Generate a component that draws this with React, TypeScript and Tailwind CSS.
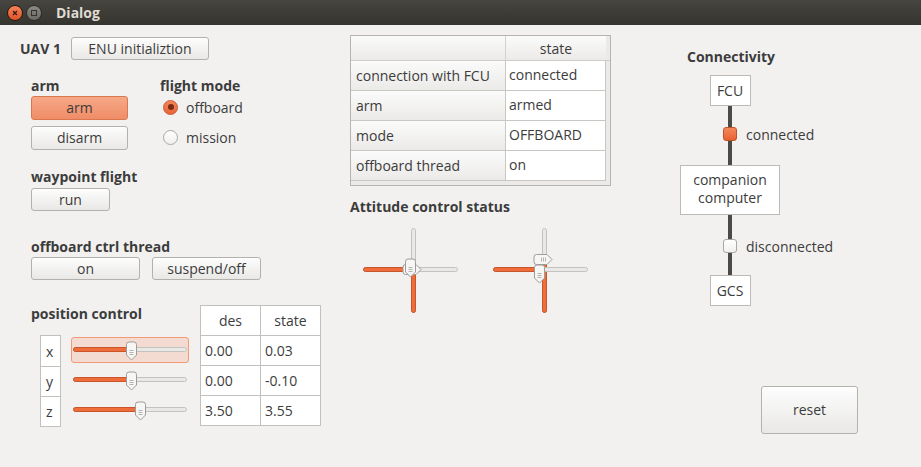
import React from 'react';

const btn =
    'h-[23px] rounded-[3px] border border-[#b3b1ae] bg-linear-to-b from-[#fdfdfd] to-[#e9e8e6] text-[14px] leading-none text-[#3c3c3c] shadow-[inset_0_1px_0_#ffffff]';

const HandleDown: React.FC = () => (
    <svg width="13" height="20" viewBox="0 0 13 20">
        <path d="M1.5 3.5 A2.5 2.5 0 0 1 4 1 H9 A2.5 2.5 0 0 1 11.5 3.5 V14 L6.5 19 L1.5 14 Z" fill="#f6f6f5" stroke="#9e9c99" />
        <path d="M4.5 9.5 H8.5 M4.5 11.5 H8.5 M4.5 13.5 H8.5" stroke="#b4b2af" strokeWidth="1" />
    </svg>
);

const HandleRight: React.FC = () => (
    <svg width="20" height="13" viewBox="0 0 20 13">
        <path d="M3.5 1.5 H14 L19 6.5 L14 11.5 H3.5 A2.5 2.5 0 0 1 1 9 V4 A2.5 2.5 0 0 1 3.5 1.5 Z" fill="#f6f6f5" stroke="#9e9c99" />
        <path d="M8.5 4.5 V8.5 M10.5 4.5 V8.5 M12.5 4.5 V8.5" stroke="#b4b2af" strokeWidth="1" />
    </svg>
);

const HSlider: React.FC<{ pos: number; focused?: boolean }> = ({ pos, focused }) => (
    <div
        className={
            'relative w-[118px] h-[26px] rounded-[3px] border ' +
            (focused ? 'bg-[#f3dbd1] border-[#f09a78]' : 'border-transparent')
        }
    >
        <div className="absolute left-[1px] right-[1px] top-[9px] h-[5px] rounded-full bg-[#e9e8e6] border border-[#c4c2bf]" />
        <div
            className="absolute left-[1px] top-[9px] h-[5px] rounded-full bg-[#ef6d3a] border border-[#c9552b]"
            style={{ width: pos }}
        />
        <div className="absolute top-[3px]" style={{ left: pos - 6 }}>
            <HandleDown />
        </div>
    </div>
);

const Crosshair: React.FC<{ vx: number; hx: number; vy: number; second?: boolean }> = ({ vx, hx, vy, second }) => (
    <div className="relative w-[100px] h-[90px]">
        {/* vertical slider groove */}
        <div className="absolute top-[3px] h-[85px] w-[5px] rounded-full bg-[#e9e8e6] border border-[#c4c2bf]" style={{ left: vx }} />
        <div
            className="absolute bottom-[2px] w-[5px] rounded-full bg-[#ef6d3a] border border-[#c9552b]"
            style={{ left: vx, top: vy }}
        />
        {/* horizontal slider groove */}
        <div className="absolute left-[3px] top-[42px] w-[95px] h-[5px] rounded-full bg-[#e9e8e6] border border-[#c4c2bf]" />
        <div
            className="absolute left-[3px] top-[42px] h-[5px] rounded-full bg-[#ef6d3a] border border-[#c9552b]"
            style={{ width: hx - 3 }}
        />
        {second ? (
            <>
                <div className="absolute" style={{ left: hx - 7, top: 39 }}>
                    <HandleDown />
                </div>
                <div className="absolute" style={{ left: vx - 9, top: vy - 7 }}>
                    <HandleRight />
                </div>
            </>
        ) : (
            <>
                <div className="absolute" style={{ left: vx - 9, top: vy - 3 }}>
                    <HandleRight />
                </div>
                <div className="absolute" style={{ left: hx - 6, top: 33 }}>
                    <HandleDown />
                </div>
            </>
        )}
    </div>
);

const Radio: React.FC<{ checked?: boolean; label: string }> = ({ checked, label }) => (
    <div className="flex items-center h-[30px]">
        {checked ? (
            <div className="w-[15px] h-[15px] ml-[3px] rounded-full border border-[#c9572d] bg-linear-to-b from-[#f4875a] to-[#e8643a] flex items-center justify-center">
                <div className="w-[6px] h-[6px] rounded-full bg-[#7a2c12]" />
            </div>
        ) : (
            <div className="w-[15px] h-[15px] ml-[3px] rounded-full border border-[#a9a7a4] bg-linear-to-b from-[#ffffff] to-[#f1f0ef]" />
        )}
        <span className="ml-[8px]">{label}</span>
    </div>
);

const Link: React.FC<{ on?: boolean; label: string; top: number; bottom: number }> = ({ on, label, top, bottom }) => (
    <div className="relative flex flex-col items-center">
        <div className="w-[4px] bg-[#4b4a47]" style={{ height: top }} />
        {on ? (
            <div className="w-[14px] h-[14px] rounded-[3px] border border-[#b9532b] bg-linear-to-b from-[#f5875a] to-[#e8612f]" />
        ) : (
            <div className="w-[14px] h-[14px] rounded-[3px] border border-[#a9a7a4] bg-linear-to-b from-[#ffffff] to-[#f1f0ef]" />
        )}
        <div className="w-[4px] bg-[#4b4a47]" style={{ height: bottom }} />
        <span className="absolute left-[23px] whitespace-nowrap leading-[14px]" style={{ top: top + 1 }}>
            {label}
        </span>
    </div>
);

const statusRows = [
    ['connection with FCU', 'connected'],
    ['arm', 'armed'],
    ['mode', 'OFFBOARD'],
    ['offboard thread', 'on'],
];

const posRows = [
    ['x', 59, '0.00', '0.03'],
    ['y', 59, '0.00', '-0.10'],
    ['z', 68, '3.50', '3.55'],
] as const;

export default function App() {
    return (
        <div className="w-[921px] h-[467px] bg-[#f2f1f0] flex flex-col overflow-hidden font-['Open_Sans',sans-serif] text-[14px] text-[#3c3c3c]">
            {/* title bar */}
            <div className="h-[25px] shrink-0 flex items-center bg-linear-to-b from-[#46453f] to-[#35342f]">
                <div className="ml-[7px] shrink-0 w-[16px] h-[16px] rounded-full border border-[#2a1a12] bg-linear-to-b from-[#f5835a] to-[#df5226] flex items-center justify-center">
                    <svg width="6" height="6" viewBox="0 0 6 6">
                        <path d="M1 1 L5 5 M5 1 L1 5" stroke="#3a1a0c" strokeWidth="1.3" />
                    </svg>
                </div>
                <div className="ml-[3px] shrink-0 w-[16px] h-[16px] rounded-full border border-[#2c2b27] bg-linear-to-b from-[#8a8984] to-[#6b6a65] flex items-center justify-center">
                    <div className="w-[6px] h-[6px] border border-[#34332f]" />
                </div>
                <span className="ml-[14px] font-bold text-[#dfdbd2]">Dialog</span>
            </div>

            <div className="flex flex-1">
                {/* left column */}
                <div className="w-[310px] ml-[20px] flex flex-col">
                    <div className="mt-[12px] flex items-center">
                        <span className="font-bold w-[51px]">UAV 1</span>
                        <button className={btn + ' w-[138px]'}>ENU initializtion</button>
                    </div>

                    <div className="pl-[11px] flex">
                        <div className="w-[129px] flex flex-col">
                            <div className="mt-[17px] h-[18px] leading-[18px] font-bold">arm</div>
                            <button className="mt-[1px] w-[97px] h-[24px] rounded-[3px] border border-[#d9774f] bg-linear-to-b from-[#f6a887] to-[#f08d67] leading-none text-[#3c3c3c]">
                                arm
                            </button>
                            <button className={btn + ' mt-[6px] w-[97px] h-[24px]'}>disarm</button>
                        </div>
                        <div className="flex flex-col">
                            <div className="mt-[17px] h-[18px] leading-[18px] font-bold">flight mode</div>
                            <div className="-mt-[3px]">
                                <Radio checked label="offboard" />
                                <Radio label="mission" />
                            </div>
                        </div>
                    </div>

                    <div className="pl-[11px] flex flex-col">
                        <div className="mt-[16px] h-[18px] leading-[18px] font-bold">waypoint flight</div>
                        <button className={btn + ' mt-[2px] w-[79px]'}>run</button>

                        <div className="mt-[27px] h-[18px] leading-[18px] font-bold">offboard ctrl thread</div>
                        <div className="mt-[1px] flex gap-[12px]">
                            <button className={btn + ' w-[109px]'}>on</button>
                            <button className={btn + ' w-[109px]'}>suspend/off</button>
                        </div>

                        <div className="mt-[25px] flex items-start">
                            <div className="w-[169px] flex flex-col">
                                <div className="h-[18px] leading-[18px] font-bold">position control</div>
                                <div className="mt-[12px] ml-[9px] flex">
                                    <div className="w-[21px] border border-[#c2c0bd] bg-white">
                                        {posRows.map(([k], i) => (
                                            <div
                                                key={k}
                                                className={'h-[30px] pl-[5px] flex items-center' + (i > 0 ? ' border-t border-[#c2c0bd]' : '')}
                                            >
                                                {k}
                                            </div>
                                        ))}
                                    </div>
                                    <div className="ml-[10px] flex flex-col">
                                        {posRows.map(([k, p], i) => (
                                            <div key={k} className="h-[30px] flex items-center">
                                                <HSlider pos={p} focused={i === 0} />
                                            </div>
                                        ))}
                                    </div>
                                </div>
                            </div>
                            <table className="border-collapse bg-white">
                                <thead>
                                    <tr className="h-[30px]">
                                        <th className="w-[60px] border border-[#c2c0bd] font-normal">des</th>
                                        <th className="w-[60px] border border-[#c2c0bd] font-normal">state</th>
                                    </tr>
                                </thead>
                                <tbody>
                                    {posRows.map(([k, , d, s]) => (
                                        <tr key={k} className="h-[30px]">
                                            <td className="border border-[#c2c0bd] pl-[4px]">{d}</td>
                                            <td className="border border-[#c2c0bd] pl-[4px]">{s}</td>
                                        </tr>
                                    ))}
                                </tbody>
                            </table>
                        </div>
                    </div>
                </div>

                {/* middle column */}
                <div className="w-[300px] ml-[20px] flex flex-col">
                    <div className="mt-[10px] w-[261px] h-[151px] border border-[#b6b4b1] bg-[#ebeae9] flex flex-col">
                        <div className="flex h-[25px] border-b border-[#cfcdca]">
                            <div className="w-[155px] border-r border-[#d4d2cf] bg-linear-to-b from-[#fbfbfb] to-[#ebeae8]" />
                            <div className="w-[100px] bg-linear-to-b from-[#fbfbfb] to-[#ebeae8] flex items-center justify-center">
                                state
                            </div>
                        </div>
                        {statusRows.map(([k, v]) => (
                            <div key={k} className="flex h-[30px]">
                                <div className="w-[155px] border-r border-b border-[#c9c7c4] bg-linear-to-b from-[#fbfbfb] to-[#ebeae8] pl-[5px] flex items-center">
                                    {k}
                                </div>
                                <div className="w-[100px] border-r border-b border-[#c9c7c4] bg-white pl-[3px] flex items-center pb-[3px]">
                                    {v}
                                </div>
                            </div>
                        ))}
                    </div>

                    <div className="mt-[12px] h-[18px] leading-[18px] font-bold">Attitude control status</div>
                    <div className="mt-[9px] ml-[10px] flex gap-[30px]">
                        <Crosshair vx={51} hx={50} vy={41} />
                        <Crosshair vx={52} hx={50} vy={35} second />
                    </div>
                </div>

                {/* right column */}
                <div className="w-[230px] ml-[30px] flex flex-col">
                    <div className="mt-[23px] ml-[7px] h-[18px] leading-[18px] font-bold">Connectivity</div>
                    <div className="mt-[9px] w-[100px] flex flex-col items-center">
                        <div className="w-[41px] h-[31px] border border-[#bdbbb8] bg-white flex items-center justify-center">FCU</div>
                        <Link on label="connected" top={21} bottom={24} />
                        <div className="w-[100px] h-[50px] border border-[#bdbbb8] bg-white flex flex-col items-center justify-center pb-[3px] leading-[18px]">
                            <span>companion</span>
                            <span>computer</span>
                        </div>
                        <Link label="disconnected" top={24} bottom={22} />
                        <div className="w-[41px] h-[31px] border border-[#bdbbb8] bg-white flex items-center justify-center">GCS</div>
                    </div>
                    <button className={btn + ' mt-auto mb-[33px] ml-[81px] w-[97px] h-[48px]'}>reset</button>
                </div>
            </div>
        </div>
    );
}
